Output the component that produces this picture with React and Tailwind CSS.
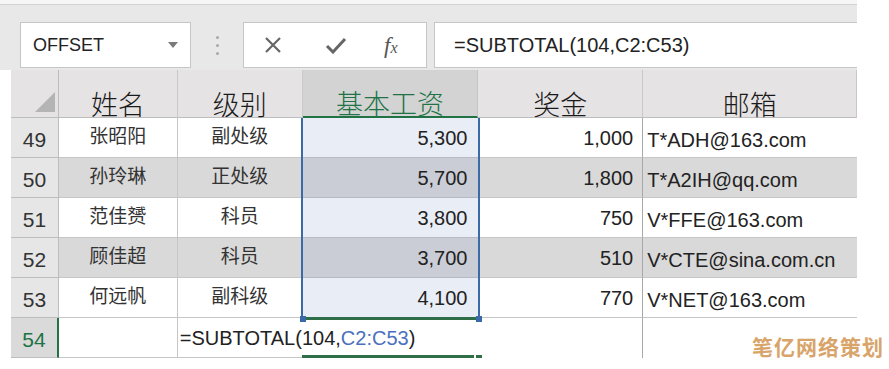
import React from 'react';

const cols = [48, 119, 125, 176, 165, 214];

const rows = [
    { n: 49, name: '张昭阳', level: '副处级', pay: '5,300', bonus: '1,000', mail: 'T*ADH@163.com', gray: false },
    { n: 50, name: '孙玲琳', level: '正处级', pay: '5,700', bonus: '1,800', mail: 'T*A2IH@qq.com', gray: true },
    { n: 51, name: '范佳赟', level: '科员', pay: '3,800', bonus: '750', mail: 'V*FFE@163.com', gray: false },
    { n: 52, name: '顾佳超', level: '科员', pay: '3,700', bonus: '510', mail: 'V*CTE@sina.com.cn', gray: true },
    { n: 53, name: '何远帆', level: '副科级', pay: '4,100', bonus: '770', mail: 'V*NET@163.com', gray: false },
];

const latin = { fontFamily: '"Liberation Sans", Arial, sans-serif' };
const cjk = { fontFamily: '"Noto Sans CJK SC", "Noto Sans", sans-serif' };

const FormulaBar = () => (
    <div className="flex h-[70px] w-[857px] flex-col bg-[#e8e8e8]">
        <div className="h-[5px] border-b border-[#d2d2d2] bg-[#f6f6f6]" />
        <div className="flex flex-1 items-start pt-[17px]">
            <div className="ml-5 flex h-[46px] w-[171px] items-center justify-between border border-[#c6c6c6] bg-white pl-3 pr-3">
                <span className="text-[18px] text-[#222]" style={latin}>OFFSET</span>
                <svg width="10" height="6" viewBox="0 0 10 6"><path d="M0 0h10L5 6z" fill="#7a7a7a" /></svg>
            </div>
            <div className="flex h-[46px] w-[52px] flex-col items-center justify-center gap-[5px]">
                <span className="h-[3px] w-[3px] rounded-full bg-[#a8a8a8]" />
                <span className="h-[3px] w-[3px] rounded-full bg-[#a8a8a8]" />
                <span className="h-[3px] w-[3px] rounded-full bg-[#a8a8a8]" />
            </div>
            <div className="flex h-[46px] w-[184px] items-center border border-[#c6c6c6] bg-white">
                <svg className="ml-[20px]" width="18" height="18" viewBox="0 0 18 18">
                    <path d="M2 2L16 16M16 2L2 16" stroke="#666" strokeWidth="2.2" />
                </svg>
                <svg className="ml-[43px]" width="22" height="17" viewBox="0 0 22 17">
                    <path d="M2 9L8 15L20 2" stroke="#666" strokeWidth="3" fill="none" />
                </svg>
                <span className="ml-[37px] text-[23px] italic leading-none text-[#555]" style={{ fontFamily: '"Liberation Serif", serif' }}>
                    f<span className="text-[16px]">x</span>
                </span>
            </div>
            <div className="ml-[7px] flex h-[46px] flex-1 items-center border-y border-l border-[#c6c6c6] bg-white pl-[19px]">
                <span className="text-[20px] text-[#222]" style={latin}>=SUBTOTAL(104,C2:C53)</span>
            </div>
        </div>
    </div>
);

const HeaderRow = () => {
    const labels = ['姓名', '级别', '基本工资', '奖金', '邮箱'];
    return (
        <div className="flex h-[48px] bg-[#e6e3e4]">
            <div className="flex w-[48px] items-end justify-end border-r border-b border-[#bdbdbd] pb-[5px] pr-[3px]">
                <svg width="20" height="20" viewBox="0 0 20 20"><path d="M20 0V20H0z" fill="#b4b4b4" /></svg>
            </div>
            {labels.map((l, i) => (
                <div
                    key={l}
                    className={
                        i === 2
                            ? 'flex items-end justify-center border-r border-b-2 border-r-[#c4c4c4] border-b-[#217346] bg-[#d3d3d3] text-[#217346] leading-none'
                            : 'flex items-end justify-center border-r border-b border-r-[#c9c9c9] border-b-[#bdbdbd] text-[#1a1a1a] leading-none'
                    }
                    style={{ width: cols[i + 1], ...cjk }}
                >
                    <span className="text-[27px] font-light leading-none">{l}</span>
                </div>
            ))}
        </div>
    );
};

const DataRow = ({ r }) => {
    const fill = r.gray ? 'bg-[#d9d9d9]' : 'bg-white';
    const sel = r.gray ? 'bg-[#cacdd6]' : 'bg-[#e9edf6]';
    return (
        <div className="flex h-[40px]">
            <div className="flex w-[48px] items-end justify-center border-r border-b border-[#bdbdbd] bg-[#e6e6e6] pb-[2px] text-[21px] text-[#333]" style={latin}>
                {r.n}
            </div>
            <div className={`flex w-[119px] items-center justify-center border-r border-b border-[#c6c6c6] pb-[4px] text-[19px] text-[#333] ${fill}`} style={cjk}>
                {r.name}
            </div>
            <div className={`flex w-[125px] items-center justify-center border-r border-b border-[#c6c6c6] pb-[4px] text-[19px] text-[#333] ${fill}`} style={cjk}>
                {r.level}
            </div>
            <div className={`flex w-[176px] items-end justify-end border-b border-[#b8bac2] pb-[4px] pr-[11px] text-[20px] text-[#222] ${sel}`} style={latin}>
                {r.pay}
            </div>
            <div className={`flex w-[165px] items-end justify-end border-r border-b border-r-[#a8a8a8] border-b-[#c6c6c6] pb-[4px] pr-[9px] text-[20px] text-[#222] ${fill}`} style={latin}>
                {r.bonus}
            </div>
            <div className={`flex w-[214px] items-end border-b border-[#c6c6c6] pb-[2px] pl-[4px] text-[20px] text-[#222] ${fill}`} style={latin}>
                {r.mail}
            </div>
        </div>
    );
};

const Handle = ({ className }) => <div className={`absolute h-[6px] w-[6px] bg-[#3a6aa8] ${className}`} />;

export default function App() {
    return (
        <div className="relative h-[369px] w-[889px] overflow-hidden bg-white">
            <FormulaBar />
            <div className="ml-[11px] w-[846px]">
                <HeaderRow />
                <div className="relative">
                    {rows.map((r) => <DataRow key={r.n} r={r} />)}
                    <div className="flex h-[40px]">
                        <div className="flex w-[48px] items-end justify-center border-r-2 border-b border-r-[#217346] border-b-[#bdbdbd] bg-[#dadada] pb-[2px] text-[21px] text-[#217346]" style={latin}>
                            54
                        </div>
                        <div className="w-[119px] border-r border-b border-[#c6c6c6] bg-white" />
                        <div className="relative w-[125px] border-b border-[#c6c6c6] bg-white">
                            <span className="absolute bottom-[4px] left-[2px] whitespace-nowrap text-[20px] text-[#222]" style={latin}>
                                =SUBTOTAL(104,<span className="text-[#4a6fc0]">C2:C53</span>)
                            </span>
                        </div>
                        <div className="w-[176px] bg-white" />
                        <div className="w-[165px] border-r border-r-[#a8a8a8] bg-white" />
                        <div className="w-[214px] bg-white" />
                    </div>
                    {/* range reference highlight */}
                    <div className="pointer-events-none absolute left-[290px] top-0 h-[200px] w-[179px] border-x-2 border-[#3a6aa8]">
                        <div className="absolute bottom-[-2px] left-[2px] right-[2px] h-[3px] bg-[#2f6f48]" />
                        <Handle className="bottom-[-4px] left-[-3px]" />
                        <Handle className="bottom-[-4px] right-[-4px]" />
                    </div>
                    <div className="absolute left-[291px] top-[237px] h-[3px] w-[172px] bg-[#2f6f48]" />
                    <div className="absolute left-[465px] top-[237px] h-[3px] w-[6px] bg-[#2f6f48]" />
                </div>
            </div>
            <span className="absolute bottom-[7px] right-[5px] text-[21px] font-bold tracking-[1px] text-[#d8a46a]" style={cjk}>
                笔亿网络策划
            </span>
        </div>
    );
}
